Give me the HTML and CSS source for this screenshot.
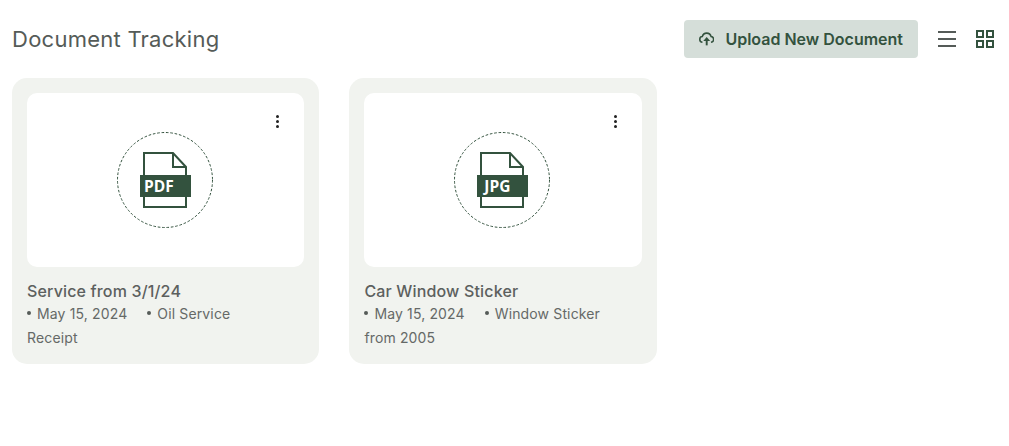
FILE: index.html
```html
<!DOCTYPE html>
<html lang="en">
<head>
<meta charset="utf-8">
<title>Document Tracking</title>
<link rel="stylesheet" href="styles.css">
</head>
<body>
<main class="page">
  <header class="header">
    <h1 class="title">Document Tracking</h1>
    <div class="actions">
      <button class="upload" type="button">
        <svg class="upload-icon" width="16" height="14" viewBox="0 0 16 14" fill="none" stroke="#33523e" stroke-width="1.6">
          <path d="M3.6 10.4C1.8 10.2.8 9 .8 7.4.8 5.8 2 4.6 3.4 4.5 4 2.3 5.8.9 8 .9s4 1.4 4.6 3.6c1.5.2 2.6 1.4 2.6 2.9 0 1.6-1 2.8-2.8 3"/>
          <path d="M8 13.6V8.4" stroke-width="2"/>
          <path d="M8 4.8 4.4 9.2H11.6Z" fill="#33523e" stroke="none"/>
        </svg>
        Upload New Document
      </button>
      <svg class="view-icon" width="18" height="18" viewBox="0 0 18 18" fill="none" stroke="#555b58" stroke-width="2">
        <path d="M0 2H18M0 9H18M0 16H18"/>
      </svg>
      <svg class="view-icon" width="18" height="18" viewBox="0 0 18 18" fill="none" stroke="#33523e" stroke-width="2">
        <rect x="1" y="1" width="6" height="6"/><rect x="11" y="1" width="6" height="6"/>
        <rect x="1" y="11" width="6" height="6"/><rect x="11" y="11" width="6" height="6"/>
      </svg>
    </div>
  </header>
  <section class="grid">
    <article class="card">
      <div class="preview">
        <span class="menu"><i></i><i></i><i></i></span>
        <div class="ring">
          <svg class="ring-line" width="96" height="96" viewBox="0 0 96 96" fill="none" stroke="#33523e" stroke-width="1" stroke-dasharray="2.6 1.8"><circle cx="48" cy="48" r="47.5"/></svg>
          <div class="file">
            <svg class="sheet" width="44" height="56" viewBox="0 0 44 56" fill="none" stroke="#33523e" stroke-width="2">
              <path d="M1 1H30L43 15V55H1Z"/><path d="M30 1V15H43"/>
            </svg>
            <span class="ext">PDF</span>
          </div>
        </div>
      </div>
      <h2 class="name">Service from 3/1/24</h2>
      <p class="meta"><span class="item">May 15, 2024</span><span class="item">Oil Service Receipt</span></p>
    </article>
    <article class="card">
      <div class="preview">
        <span class="menu"><i></i><i></i><i></i></span>
        <div class="ring">
          <svg class="ring-line" width="96" height="96" viewBox="0 0 96 96" fill="none" stroke="#33523e" stroke-width="1" stroke-dasharray="2.6 1.8"><circle cx="48" cy="48" r="47.5"/></svg>
          <div class="file">
            <svg class="sheet" width="44" height="56" viewBox="0 0 44 56" fill="none" stroke="#33523e" stroke-width="2">
              <path d="M1 1H30L43 15V55H1Z"/><path d="M30 1V15H43"/>
            </svg>
            <span class="ext ext-wide">JPG</span>
          </div>
        </div>
      </div>
      <h2 class="name">Car Window Sticker</h2>
      <p class="meta"><span class="item">May 15, 2024</span><span class="item">Window Sticker from 2005</span></p>
    </article>
  </section>
</main>
</body>
</html>
```
FILE: styles.css
```css
* { box-sizing: border-box; }
body { margin: 0; background: #fff; font-family: Inter, "Liberation Sans", sans-serif; }
.page { padding: 20px 12px 0; }
.header { display: flex; align-items: center; justify-content: space-between; height: 38px; margin-bottom: 20px; }
.title { margin: 0; font-size: 22px; font-weight: 400; letter-spacing: 0.25px; color: #555b58; }
.actions { display: flex; align-items: center; gap: 20px; padding-right: 3px; }
.upload { display: flex; align-items: center; gap: 11px; width: 234px; height: 38px; padding: 0 15px; border: 0; border-radius: 4px; background: #d5ded9; color: #33523e; font: 600 16px Inter, sans-serif; white-space: nowrap; }
.view-icon { display: block; }
.grid { display: grid; grid-template-columns: repeat(3, 307.4px); gap: 30px; }
.card { height: 286px; padding: 15px; border-radius: 15px; background: #f1f3ef; }
.preview { position: relative; display: flex; align-items: center; justify-content: center; height: 174px; border-radius: 10px; background: #fff; }
.menu { position: absolute; top: 22px; right: 25px; display: flex; flex-direction: column; gap: 2px; }
.menu i { width: 3px; height: 3px; border-radius: 50%; background: #222; }
.ring { position: relative; display: flex; align-items: center; justify-content: center; width: 96px; height: 96px; margin-right: 1.5px; }
.ring-line { position: absolute; inset: 0; }
.file { position: relative; width: 44px; height: 56px; }
.sheet { display: block; }
.ext { position: absolute; top: 23px; left: -3px; width: 51px; height: 22px; padding-left: 4px; background: #33523e; color: #fff; font: 700 15.5px/22px "Open Sans", sans-serif; }
.ext-wide { padding-left: 7px; }
.name { margin: 14px 0 0; font-size: 16px; line-height: 20px; font-weight: 500; letter-spacing: 0.01em; color: #5c605e; }
.meta { margin: 1px 0 0; padding-right: 30px; font-size: 14px; line-height: 24px; letter-spacing: 0.01em; color: #656967; }
.item { margin-right: 20px; }
.item::before { content: ""; display: inline-block; width: 4px; height: 4px; margin-right: 6px; border-radius: 50%; background: #555b58; vertical-align: 4px; }
```
